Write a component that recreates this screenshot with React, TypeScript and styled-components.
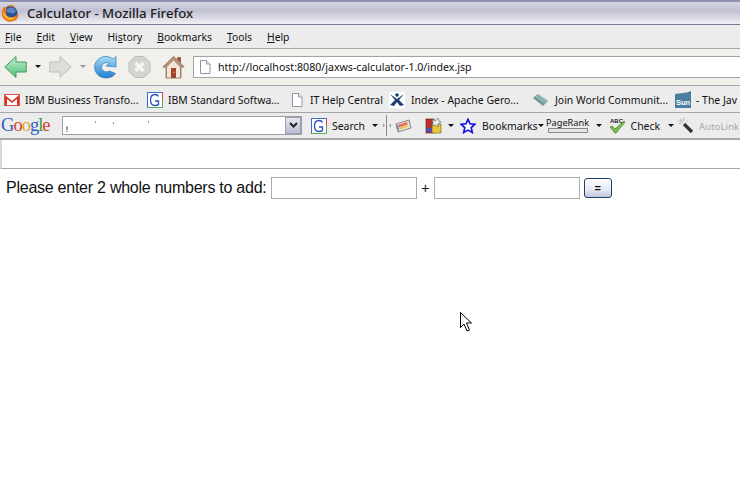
import styled, { createGlobalStyle } from "styled-components";

const GlobalStyle = createGlobalStyle`
  html, body { margin: 0; padding: 0; background: #fff; }
  body { width: 740px; height: 484px; overflow: hidden; position: relative; font-family: "Noto Sans", sans-serif; }
`;

const TitleBar = styled.div`
  height: 25px;
  box-sizing: border-box;
  border-top: 2px solid #8f8fb0;
  border-bottom: 1px solid #77778f;
  background: linear-gradient(#d4d4e2, #c0c0d2 40%, #f0f0f4);
  display: flex;
  align-items: center;
  gap: 8px;
  padding-left: 1px;
`;

const TitleText = styled.span`
  font-size: 13.2px;
  font-weight: 500;
  color: #1c1c1c;
`;

const MenuBar = styled.div`
  height: 24px;
  box-sizing: border-box;
  background: #ececec;
  border-bottom: 1px solid #a6a6a6;
  display: flex;
  align-items: center;
  padding-left: 5px;
  gap: 15px;
  font-size: 10.3px;
  color: #111;
`;

const MenuItem = styled.span`
  & u { text-underline-offset: 1px; }
`;

const NavBar = styled.div`
  height: 37px;
  box-sizing: border-box;
  background: #f1f0ea;
  border-bottom: 1px solid #a6a6a6;
  display: flex;
  align-items: center;
  padding: 0 0 1px 4px;
`;

const NavButton = styled.span<{ $gap?: number }>`
  display: flex;
  flex: none;
  margin-right: ${(p) => p.$gap ?? 0}px;
`;

const Caret = styled.span<{ $color?: string; $gap: number }>`
  width: 0;
  height: 0;
  border-left: 3px solid transparent;
  border-right: 3px solid transparent;
  border-top: 3px solid ${(p) => p.$color ?? "#111"};
  margin-right: ${(p) => p.$gap}px;
  flex: none;
`;

const AddressBox = styled.div`
  flex: 1;
  height: 22px;
  box-sizing: border-box;
  background: #fff;
  border: 1px solid #a4a4a4;
  border-right: none;
  display: flex;
  align-items: center;
  gap: 7px;
  padding-left: 5px;
  font-size: 10.6px;
  color: #111;
`;

const BookmarkBar = styled.div`
  height: 27px;
  box-sizing: border-box;
  background: #ececec;
  border-bottom: 1px solid #a6a6a6;
  display: flex;
  align-items: center;
  padding: 1px 0 0 4px;
  font-size: 10.45px;
  color: #111;
  white-space: nowrap;
  overflow: hidden;
`;

const Bookmark = styled.span<{ $width: number; $gap?: number }>`
  display: flex;
  align-items: center;
  gap: ${(p) => p.$gap ?? 5}px;
  flex: none;
  width: ${(p) => p.$width}px;
`;

const GoogleBar = styled.div`
  height: 27px;
  box-sizing: border-box;
  background: #ececec;
  border-bottom: 2px solid #a8a8a8;
  display: flex;
  align-items: center;
  padding-left: 1px;
  font-size: 10.45px;
  color: #111;
  white-space: nowrap;
  overflow: hidden;
`;

const GoogleLogo = styled.span`
  font-family: "Liberation Serif", serif;
  font-size: 18.5px;
  letter-spacing: -1px;
  width: 61px;
  flex: none;
  font-weight: 500;
`;

const Letter = styled.span<{ $color: string }>`
  color: ${(p) => p.$color};
`;

const SearchCombo = styled.div`
  width: 240px;
  height: 19px;
  flex: none;
  box-sizing: border-box;
  background: #fff;
  border: 1px solid #a0a0a0;
  display: flex;
  justify-content: space-between;
  align-items: stretch;
  margin-right: 9px;
`;

const ComboArrow = styled.span`
  width: 16px;
  background: linear-gradient(#e4e6f2, #b9bdd0);
  border: 1px solid #9a9fb4;
  box-sizing: border-box;
  display: flex;
  align-items: center;
  justify-content: center;
`;

const ToolItem = styled.span<{ $gap?: number; $muted?: boolean }>`
  display: flex;
  align-items: center;
  gap: 5px;
  flex: none;
  padding-top: 1px;
  margin-right: ${(p) => p.$gap ?? 0}px;
  color: ${(p) => (p.$muted ? "#a8a8a8" : "#111")};
  font-size: ${(p) => (p.$muted ? "9.6px" : "inherit")};
  & svg { margin-top: -1px; }
`;

const PageRank = styled.span`
  display: flex;
  flex-direction: column;
  align-items: center;
  flex: none;
  width: 44px;
  font-size: 9.2px;
  line-height: 10px;
  margin: -1px 6px 0 0;
  & i {
    display: block;
    width: 38px;
    height: 3px;
    border: 1px solid #888;
    background: #e6e6e6;
  }
`;

const TabStrip = styled.div`
  height: 29px;
  box-sizing: border-box;
  background: #fff;
  border-bottom: 1px solid #a6a6a6;
  border-left: 2px solid #d8d8d8;
`;

const Content = styled.form`
  display: flex;
  align-items: center;
  height: 38px;
  padding: 0 0 1px 6px;
  font-family: "Liberation Sans", Arial, sans-serif;
  font-size: 16px;
  letter-spacing: -0.25px;
  color: #111;
  box-sizing: border-box;
`;

const NumberInput = styled.input`
  width: 146px;
  height: 22px;
  box-sizing: border-box;
  border: 1px solid #a5acb2;
  background: #fff;
  margin: 0;
`;

const Plus = styled.span`
  font-size: 14px;
  width: 17px;
  text-align: center;
`;

const EqualsButton = styled.button`
  width: 28px;
  height: 20px;
  margin-left: 4px;
  padding: 0;
  border: 1px solid #1f3f6c;
  border-radius: 3px;
  background: linear-gradient(#fdfdff, #e6e8f4 60%, #c0c4de);
  font-family: "Liberation Sans", Arial, sans-serif;
  font-size: 11px;
  font-weight: 700;
  color: #111;
`;

const Pointer = styled.svg`
  position: absolute;
  left: 460px;
  top: 312px;
`;

const Fox = () => (
  <svg width="18" height="19" viewBox="0 0 18 19">
    <circle cx="9" cy="9.500" r="7.500" fill="#2c4f96" />
    <path d="M5 7c1-3 4-4 7-3l3 3c-1 2-3 3-5 2-2 0-3-1-5-2z" fill="#5f86c4" />
    <path d="M3 3C0 7 0 13 4 16c3 3 9 2 12-1 1-2 2-4 1-6-1 2-3 4-6 4-3 1-6-1-6-4 0-2 0-4 1-6-1 0-2 0-3 0z" fill="#e8761a" />
    <path d="M2 10c1 3 3 5 6 6 3 0 5-1 7-3-3 1-7 1-9-1-2-1-3-3-3-5z" fill="#f6b52e" />
    <path d="M6 2c3-2 7-1 9 2-2-1-5-2-7-1z" fill="#e8761a" />
  </svg>
);

const BackIcon = () => (
  <svg width="23" height="24" viewBox="0 0 23 24">
    <defs>
      <linearGradient id="bk" x1="0" y1="0" x2="0" y2="1">
        <stop offset="0" stopColor="#c4f0d0" />
        <stop offset="1" stopColor="#4fc07a" />
      </linearGradient>
    </defs>
    <path d="M.8 12 12 1.500V7h10.200v10H12v5.500z" fill="url(#bk)" stroke="#3f9a63" strokeWidth="1" />
  </svg>
);

const ForwardIcon = () => (
  <svg width="23" height="24" viewBox="0 0 23 24">
    <path d="M22.200 12 11 1.500V7H.8v10H11v5.500z" fill="#dcdcd8" stroke="#c0c0bc" strokeWidth="1" />
  </svg>
);

const ReloadIcon = () => (
  <svg width="23" height="24" viewBox="0 0 23 24">
    <defs>
      <linearGradient id="rl" x1="0" y1="0" x2="0" y2="1">
        <stop offset="0" stopColor="#a5dcf6" />
        <stop offset="1" stopColor="#1f7fcf" />
      </linearGradient>
    </defs>
    <path d="M22 1.500V12l-10-1 3.500-2.500C12 6.500 8 8.500 7.500 12c0 4 4.500 6 8 4l6 2.500C18 23.500 11 24 6 21.500 0 18-1 10 3 5.500 7 1 14 0 19 4z" fill="url(#rl)" stroke="#2a78bd" strokeWidth=".7" />
  </svg>
);

const StopIcon = () => (
  <svg width="23" height="24" viewBox="0 0 23 24">
    <path d="M7 1.500h9l6 6v9l-6 6H7l-6-6v-9z" fill="#d4d4d0" stroke="#bdbdb9" />
    <path d="M7.500 8l8 8M15.500 8l-8 8" stroke="#f6f6f4" strokeWidth="3.400" />
  </svg>
);

const HomeIcon = () => (
  <svg width="23" height="24" viewBox="0 0 23 24">
    <path d="M11.500 1.500.8 12H4v11h15V12h3.200L18.500 8V2.500h-3V5z" fill="#b98f78" stroke="#8d6f5d" strokeWidth=".8" />
    <path d="M16 2.500h2.500V7L16 5z" fill="#a5432f" />
    <path d="M5 12l6.500-6.500L18 12v10.500H5z" fill="#f0e6d8" />
    <rect x="9" y="13" width="5" height="10" fill="#a5432f" />
    <rect x="11.500" y="17" width="1" height="1" fill="#f5e642" />
  </svg>
);

const PageIcon = () => (
  <svg width="12" height="14" viewBox="0 0 12 14">
    <path d="M1.500.5h6l3.500 3.500v9.500h-9.500z" fill="#fff" stroke="#8d96a8" />
    <path d="M7.500.5V4H11" fill="#e8ecf2" stroke="#8d96a8" />
  </svg>
);

const GmailIcon = () => (
  <svg width="16" height="12" viewBox="0 0 16 12">
    <rect x="0.500" y="0.500" width="15" height="11" fill="#fff" stroke="#d9534a" />
    <path d="M1 1l7 6 7-6v10h-2V5L8 9 3 5v6H1z" fill="#d8362a" />
  </svg>
);

const GIcon = ({ size = 16 }: { size?: number }) => (
  <svg width={size} height={size} viewBox="0 0 16 16">
    <rect x=".5" y=".5" width="15" height="15" fill="#fff" stroke="#3a6cc8" />
    <path d="M.5 15.500h15V8" fill="none" stroke="#5ab05a" />
    <path d="M15.500 8V.5" fill="none" stroke="#d04a3a" />
    <path d="M11.500 4.500C11 3 9.500 2.500 8 2.500c-2.500 0-4.500 2-4.500 5.500s2 5.500 4.500 5.500c1.500 0 3-.5 3.500-1V9H8" fill="none" stroke="#2a4fb8" strokeWidth="1.300" />
  </svg>
);

const ApacheIcon = () => (
  <svg width="16" height="16" viewBox="0 0 16 16">
    <rect width="16" height="16" fill="#fff" />
    <circle cx="8" cy="3" r="1.800" fill="#1c3c72" />
    <path d="M1 2l7 5 7-5-5 6 5 5-4 1-3-4-3 4-4-1 5-5z" fill="#1c3c72" />
  </svg>
);

const WcgIcon = () => (
  <svg width="17" height="14" viewBox="0 0 17 14">
    <path d="M1 5l5-4 10 7-5 5z" fill="#6f9a9a" />
    <path d="M4 3l9 7M6 2l9 7" stroke="#b8d0cc" />
  </svg>
);

const SunIcon = () => (
  <svg width="16" height="17" viewBox="0 0 16 17">
    <path d="M0 3l12-1.500L16 0v17H0z" fill="#4a7da0" />
    <text x="1" y="14" fontSize="7.500" fontWeight="700" fill="#fff" fontFamily="Liberation Sans, sans-serif">Sun</text>
  </svg>
);

const ComboSpecks = () => (
  <svg width="100" height="17" viewBox="0 0 100 17">
    <path d="M4 9.500v3.500M4 14v1M32 5h1M50 6h1M85 5h1" stroke="#333" strokeWidth="1" fill="none" />
  </svg>
);

const ChevronDown = () => (
  <svg width="9" height="7" viewBox="0 0 9 7">
    <path d="M1 1l3.500 3.500L8 1" fill="none" stroke="#222" strokeWidth="2" />
  </svg>
);

// toolbar separator with its little resize arrows
const ResizeGrip = () => (
  <svg width="10" height="21" viewBox="0 0 10 21">
    <path d="M3 10.500L1 8.500v4zM7 10.500l2-2v4z" fill="#9a9a9a" />
    <path d="M4.500 0v21" stroke="#8a8a8a" />
  </svg>
);

const NewsIcon = () => (
  <svg width="17" height="14" viewBox="0 0 17 14">
    <path d="M1 5l13-4 2 8-13 4z" fill="#e8e4dc" stroke="#8a8478" />
    <path d="M3 6l9-3 .8 2.500-9 3z" fill="#e86a5a" />
    <path d="M4 9l9-3 .4 1.500-9 3z" fill="#e8c43a" />
    <path d="M2 6.500l1.500 5" stroke="#5a8ae0" strokeWidth="1.500" />
  </svg>
);

const PuzzleIcon = () => (
  <svg width="17" height="17" viewBox="0 0 17 17">
    <rect x="1" y="2" width="8" height="14" fill="#b8322a" stroke="#5a1a14" strokeWidth=".6" />
    <rect x="7" y="7" width="9" height="9" fill="#e8c43a" stroke="#6a5a2a" strokeWidth=".6" />
    <circle cx="4" cy="13" r="2.500" fill="#3a58c8" />
    <path d="M7 2l3 2 3-3 1 3 2 1-3 2 0 3-3-2-3 1 1-3z" fill="#ececec" stroke="#555" strokeWidth=".6" />
  </svg>
);

const StarIcon = () => (
  <svg width="16" height="16" viewBox="0 0 16 16">
    <path d="M8 1.300l2 4.500 4.900.5-3.700 3.300 1.100 4.900L8 12.100l-4.300 2.400 1.100-4.900L1.100 6.300 6 5.800z" fill="#fff" stroke="#1414e0" strokeWidth="1.700" />
  </svg>
);

const CheckIcon = () => (
  <svg width="17" height="17" viewBox="0 0 17 17">
    <text x="1" y="6" fontSize="6" fontWeight="700" fill="#222" fontFamily="Liberation Sans, sans-serif">ABC</text>
    <path d="M1 10l2-1 3 3 9-8 1 1-9 11h-1z" fill="#7cbe4a" stroke="#3f7a22" strokeWidth=".7" />
  </svg>
);

const WandIcon = () => (
  <svg width="17" height="17" viewBox="0 0 17 17">
    <path d="M7 7l8 8" stroke="#333" strokeWidth="3.200" />
    <path d="M4 1v6M1 4h6M8 1l-2 2M2 7l1-1M9 4h2" stroke="#c4c4c4" strokeWidth="1.200" />
  </svg>
);

const menus = [
  ["F", "ile"],
  ["E", "dit"],
  ["V", "iew"],
  ["", "History"],
  ["B", "ookmarks"],
  ["T", "ools"],
  ["H", "elp"],
];

export default function App() {
  return (
    <>
      <GlobalStyle />
      <TitleBar>
        <Fox />
        <TitleText>Calculator - Mozilla Firefox</TitleText>
      </TitleBar>

      <MenuBar>
        {menus.map(([key, rest]) => (
          <MenuItem key={rest}>
            {key ? <u>{key}</u> : null}
            {rest === "History" ? (
              <>
                Hi<u>s</u>tory
              </>
            ) : (
              rest
            )}
          </MenuItem>
        ))}
      </MenuBar>

      <NavBar>
        <NavButton $gap={8}>
          <BackIcon />
        </NavButton>
        <Caret $gap={8} />
        <NavButton $gap={8}>
          <ForwardIcon />
        </NavButton>
        <Caret $gap={8} $color="#999" />
        <NavButton $gap={11}>
          <ReloadIcon />
        </NavButton>
        <NavButton $gap={11}>
          <StopIcon />
        </NavButton>
        <NavButton $gap={8}>
          <HomeIcon />
        </NavButton>
        <AddressBox>
          <PageIcon />
          http://localhost:8080/jaxws-calculator-1.0/index.jsp
        </AddressBox>
      </NavBar>

      <BookmarkBar>
        <Bookmark $width={143}>
          <GmailIcon />
          IBM Business Transfo...
        </Bookmark>
        <Bookmark $width={144}>
          <GIcon />
          IBM Standard Softwa...
        </Bookmark>
        <Bookmark $width={98} $gap={7}>
          <PageIcon />
          IT Help Central
        </Bookmark>
        <Bookmark $width={143} $gap={6}>
          <ApacheIcon />
          Index - Apache Gero...
        </Bookmark>
        <Bookmark $width={143} $gap={6}>
          <WcgIcon />
          Join World Communit...
        </Bookmark>
        <Bookmark $width={70}>
          <SunIcon />
          - The Jav
        </Bookmark>
      </BookmarkBar>

      <GoogleBar>
        <GoogleLogo>
          <Letter $color="#2f5fc8">G</Letter>
          <Letter $color="#d8402a">o</Letter>
          <Letter $color="#e0a820">o</Letter>
          <Letter $color="#2f5fc8">g</Letter>
          <Letter $color="#3a9a3a">l</Letter>
          <Letter $color="#d8402a">e</Letter>
        </GoogleLogo>
        <SearchCombo>
          <ComboSpecks />
          <ComboArrow>
            <ChevronDown />
          </ComboArrow>
        </SearchCombo>
        <ToolItem $gap={7}>
          <GIcon />
          Search
        </ToolItem>
        <Caret $gap={4} />
        <NavButton $gap={3}>
          <ResizeGrip />
        </NavButton>
        <NavButton $gap={13}>
          <NewsIcon />
        </NavButton>
        <NavButton $gap={6}>
          <PuzzleIcon />
        </NavButton>
        <Caret $gap={6} />
        <NavButton $gap={6}>
          <StarIcon />
        </NavButton>
        <ToolItem>Bookmarks</ToolItem>
        <Caret $gap={2} />
        <PageRank>
          PageRank
          <i />
        </PageRank>
        <Caret $gap={7} />
        <ToolItem $gap={8}>
          <CheckIcon />
          Check
        </ToolItem>
        <Caret $gap={3} />
        <ToolItem $muted>
          <WandIcon />
          AutoLink
        </ToolItem>
      </GoogleBar>

      <TabStrip />

      <Content onSubmit={(e) => e.preventDefault()}>
        Please enter 2 whole numbers to add:&nbsp;
        <NumberInput />
        <Plus>+</Plus>
        <NumberInput />
        <EqualsButton>=</EqualsButton>
      </Content>

      <Pointer width="13" height="21" viewBox="0 0 13 21">
        <path d="M.5.500v15l3.500-3.500 3 7 2.500-1-3-7h5z" fill="#fff" stroke="#000" />
      </Pointer>
    </>
  );
}
